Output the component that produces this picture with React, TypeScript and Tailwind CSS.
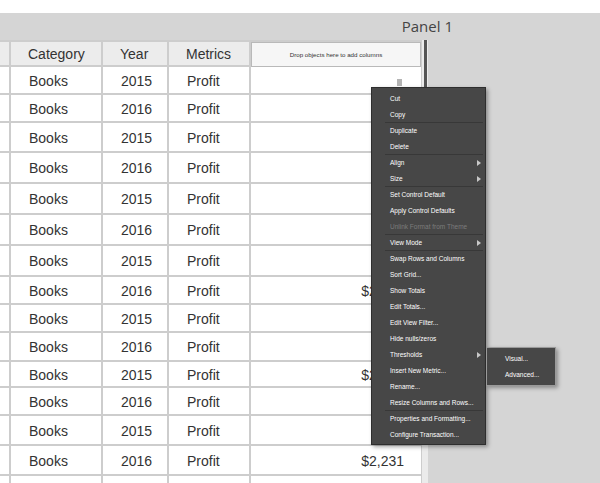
const cols = [
  { key: 'edge', w: 'w-[11px]' },
  { key: 'Category', w: 'w-[92px]' },
  { key: 'Year', w: 'w-[66px]' },
  { key: 'Metrics', w: 'w-[82px]' },
];

const rows = [
  { h: 'h-[28px]', year: '2015' },
  { h: 'h-[28px]', year: '2016' },
  { h: 'h-[30px]', year: '2015' },
  { h: 'h-[31px]', year: '2016' },
  { h: 'h-[31px]', year: '2015' },
  { h: 'h-[31px]', year: '2016' },
  { h: 'h-[31px]', year: '2015' },
  { h: 'h-[28px]', year: '2016', value: '$2,147' },
  { h: 'h-[28px]', year: '2015' },
  { h: 'h-[29px]', year: '2016' },
  { h: 'h-[26px]', year: '2015', value: '$2,108' },
  { h: 'h-[28px]', year: '2016' },
  { h: 'h-[30px]', year: '2015' },
  { h: 'h-[30px]', year: '2016', value: '$2,231' },
  { h: 'h-[30px]', year: '', empty: true },
];

type Item = { label: string; sep?: boolean; sub?: boolean; disabled?: boolean };

const menu: Item[] = [
  { label: 'Cut' },
  { label: 'Copy' },
  { label: 'Duplicate', sep: true },
  { label: 'Delete' },
  { label: 'Align', sep: true, sub: true },
  { label: 'Size', sub: true },
  { label: 'Set Control Default', sep: true },
  { label: 'Apply Control Defaults' },
  { label: 'Unlink Format from Theme', disabled: true },
  { label: 'View Mode', sep: true, sub: true },
  { label: 'Swap Rows and Columns', sep: true },
  { label: 'Sort Grid...' },
  { label: 'Show Totals' },
  { label: 'Edit Totals...' },
  { label: 'Edit View Filter...' },
  { label: 'Hide nulls/zeros' },
  { label: 'Thresholds', sub: true },
  { label: 'Insert New Metric...' },
  { label: 'Rename...' },
  { label: 'Resize Columns and Rows...' },
  { label: 'Properties and Formatting...', sep: true },
  { label: 'Configure Transaction...' },
];

function Arrow() {
  return (
    <svg width="4" height="6" viewBox="0 0 4 6" className="mr-[2px]">
      <path d="M0 0 L4 3 L0 6 Z" fill="#c8c8c8" />
    </svg>
  );
}

export default function App() {
  return (
    <div className="relative flex h-[483px] w-[600px] flex-col overflow-hidden bg-white font-['Liberation_Sans',Arial,sans-serif]">
      <div className="h-[13px] shrink-0 bg-white" />
      <div className="flex flex-1 flex-col bg-[#d5d5d5]">
        <div className="flex h-[27px] shrink-0 items-center justify-end pr-[147px] font-['Open_Sans',sans-serif] text-[15px] text-[#444]">
          Panel 1
        </div>

        <div className="flex">
          <div className="w-[421px] shrink-0 bg-white text-[14px] text-[#333]">
            <div className="flex h-[27px] border-t-2 border-[#cdcdcd] bg-[#ececec]">
              {cols.map((c) => (
                <div
                  key={c.key}
                  className={`${c.w} flex items-center border-r-2 border-b-2 border-[#cdcdcd] pt-[2px] ${
                    c.key === 'edge' ? '' : 'pl-[17px]'
                  }`}
                >
                  {c.key === 'edge' ? '' : c.key}
                </div>
              ))}
              <div className="flex w-[170px] items-center justify-center border border-[#b9b9b9] bg-[#f6f6f6] text-[6.2px] text-[#333]">
                Drop objects here to add columns
              </div>
            </div>
            {rows.map((r, i) => (
              <div key={i} className={`flex ${r.h}`}>
                <div className="w-[11px] border-r-2 border-b-2 border-[#cdcdcd]" />
                <div className="flex w-[92px] items-center border-r-2 border-b-2 border-[#cdcdcd] pt-[2px] pl-[18px]">
                  {r.empty ? '' : 'Books'}
                </div>
                <div className="flex w-[66px] items-center border-r-2 border-b-2 border-[#cdcdcd] pt-[2px] pl-[18px]">
                  {r.year}
                </div>
                <div className="flex w-[82px] items-center border-r-2 border-b-2 border-[#cdcdcd] pt-[2px] pl-[18px]">
                  {r.empty ? '' : 'Profit'}
                </div>
                <div className="flex w-[170px] items-center justify-end border-b-2 border-[#cdcdcd] pt-[2px] pr-[17px]">
                  {r.value}
                </div>
              </div>
            ))}
          </div>
          <div className="flex w-[7px] shrink-0 justify-center border-l border-[#cdcdcd] bg-[#ebebeb]">
            <div className="h-[55px] w-[3px] bg-[#555]" />
          </div>
        </div>
      </div>

      {/* selection handle */}
      <div className="absolute left-[397px] top-[79px] h-[7px] w-[5px] bg-[#b4b4b4]" />

      {/* context menu */}
      <div className="absolute left-[371px] top-[87px] w-[115px] border border-[#2e2e2e] bg-[#474747] py-[2px] text-[6.5px] shadow-[2px_2px_4px_rgba(0,0,0,0.35)]">
        {menu.map((m) => (
          <div
            key={m.label}
            className={`ml-[13px] mr-[2px] flex h-[16px] items-center justify-between border-t pl-[5px] ${
              m.sep ? 'border-[#383838]' : 'border-transparent'
            } ${m.disabled ? 'text-[#7c7c7c]' : 'text-white'}`}
          >
            <span>{m.label}</span>
            {m.sub && <Arrow />}
          </div>
        ))}
      </div>

      {/* thresholds submenu */}
      <div className="absolute left-[486px] top-[347px] w-[70px] border border-[#9a9a9a] bg-[#474747] pt-[3px] pb-[2px] text-[6.5px] text-white shadow-[2px_2px_4px_rgba(0,0,0,0.35)]">
        <div className="flex h-[16px] items-center pl-[18px]">Visual...</div>
        <div className="flex h-[16px] items-center pl-[18px]">Advanced...</div>
      </div>
    </div>
  );
}
